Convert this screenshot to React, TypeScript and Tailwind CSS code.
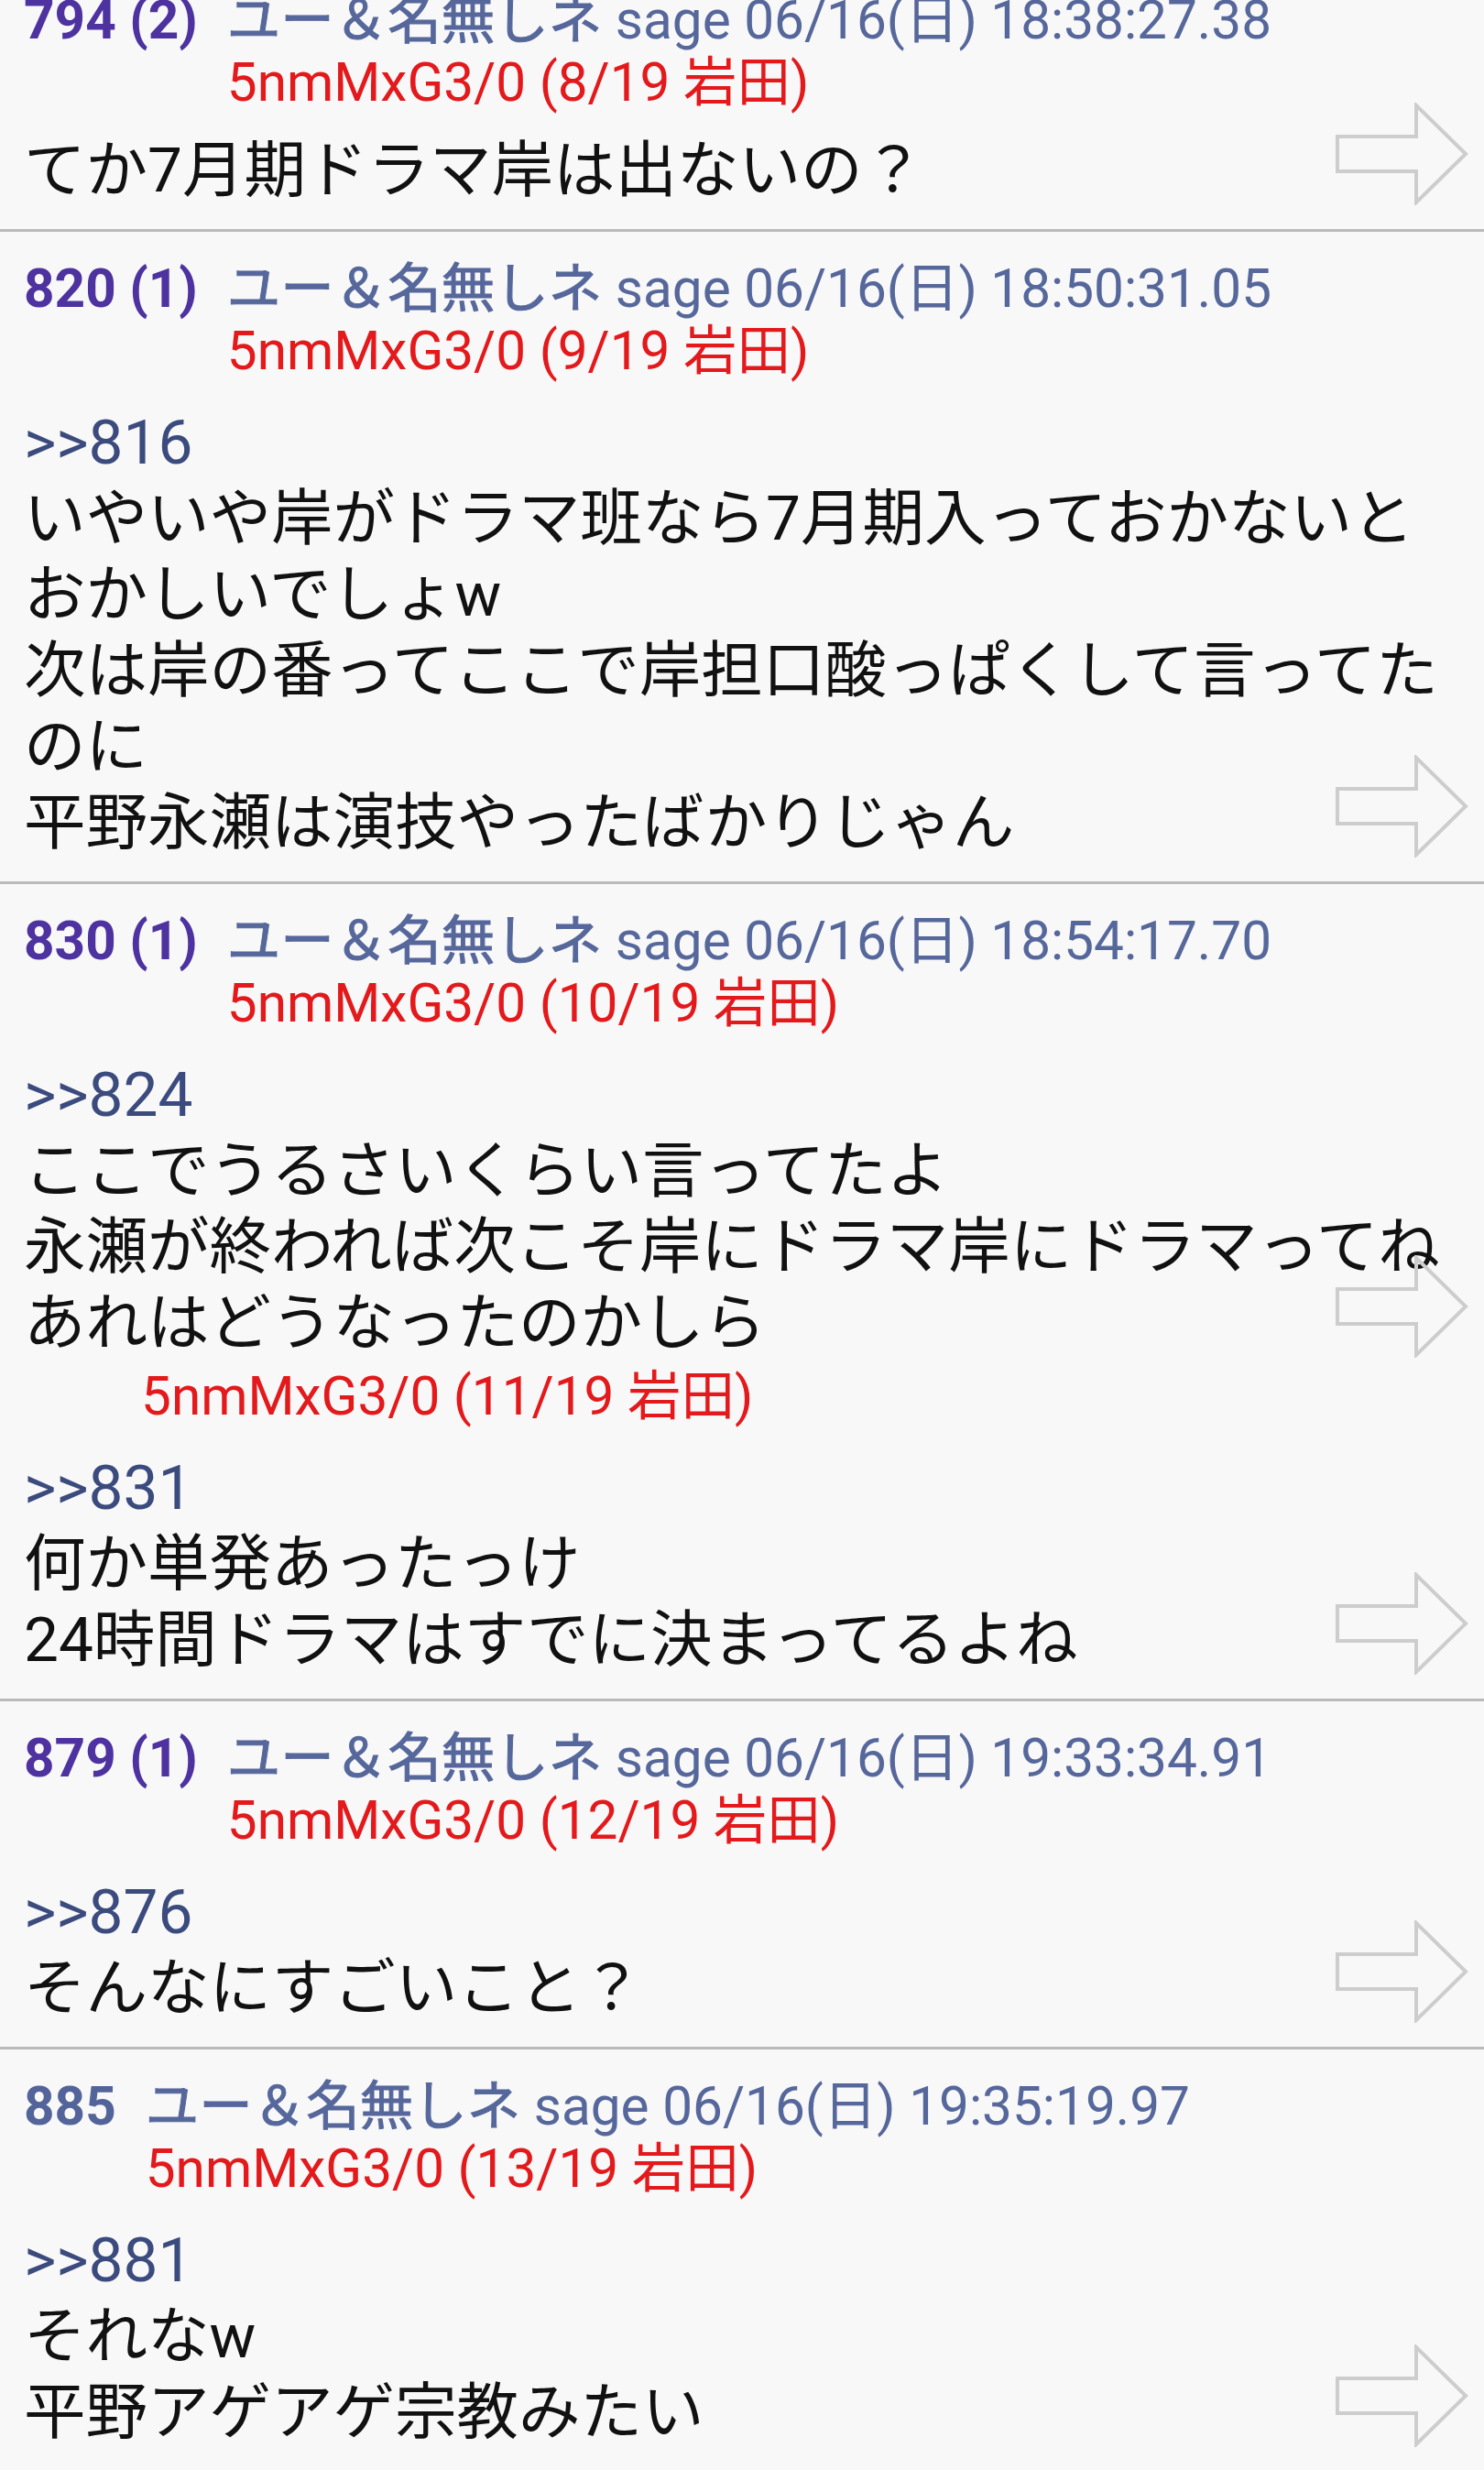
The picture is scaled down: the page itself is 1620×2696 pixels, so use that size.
import React from 'react';

type Sub = {
    id: string;
    reply?: string;
    lines: string[];
};

type Post = {
    no: string;
    count?: string;
    date: string;
    subs: Sub[];
};

const posts: Post[] = [
    {
        no: '794',
        count: '(2)',
        date: '06/16(日) 18:38:27.38',
        subs: [{ id: '5nmMxG3/0 (8/19 岩田)', lines: ['てか7月期ドラマ岸は出ないの？'] }],
    },
    {
        no: '820',
        count: '(1)',
        date: '06/16(日) 18:50:31.05',
        subs: [
            {
                id: '5nmMxG3/0 (9/19 岩田)',
                reply: '>>816',
                lines: [
                    'いやいや岸がドラマ班なら7月期入っておかないとおかしいでしょw',
                    '次は岸の番ってここで岸担口酸っぱくして言ってたのに',
                    '平野永瀬は演技やったばかりじゃん',
                ],
            },
        ],
    },
    {
        no: '830',
        count: '(1)',
        date: '06/16(日) 18:54:17.70',
        subs: [
            {
                id: '5nmMxG3/0 (10/19 岩田)',
                reply: '>>824',
                lines: [
                    'ここでうるさいくらい言ってたよ',
                    '永瀬が終われば次こそ岸にドラマ岸にドラマってね',
                    'あれはどうなったのかしら',
                ],
            },
            {
                id: '5nmMxG3/0 (11/19 岩田)',
                reply: '>>831',
                lines: ['何か単発あったっけ', '24時間ドラマはすでに決まってるよね'],
            },
        ],
    },
    {
        no: '879',
        count: '(1)',
        date: '06/16(日) 19:33:34.91',
        subs: [{ id: '5nmMxG3/0 (12/19 岩田)', reply: '>>876', lines: ['そんなにすごいこと？'] }],
    },
    {
        no: '885',
        date: '06/16(日) 19:35:19.97',
        subs: [
            {
                id: '5nmMxG3/0 (13/19 岩田)',
                reply: '>>881',
                lines: ['それなw', '平野アゲアゲ宗教みたい'],
            },
        ],
    },
];

function Arrow() {
    return (
        <svg width="145" height="112" viewBox="0 0 145 112" className="absolute right-[17px] bottom-[3px]">
            <polygon
                points="2,37 88,37 88,3 142,56 88,109 88,75 2,75"
                fill="none"
                stroke="#cdcdcd"
                strokeWidth="4"
                strokeLinejoin="miter"
            />
        </svg>
    );
}

function Body({ sub, first }: { sub: Sub; first?: boolean }) {
    return (
        <div className={`relative ${first ? 'mt-[20px]' : 'mt-[24px]'} text-[67.5px] leading-[83px] text-[#111111] pr-[28px]`}>
            {sub.reply && <div className="text-[#3b4b7e]">{sub.reply}</div>}
            {sub.lines.map((l, i) => (
                <div key={i}>{l}</div>
            ))}
            <Arrow />
        </div>
    );
}

function PostRow({ post, first }: { post: Post; first?: boolean }) {
    const [head, ...rest] = post.subs;
    return (
        <div className={`${first ? '-mt-[40px]' : ''} pt-[28px] pb-[23px] pl-[26px] border-b-[3px] border-[#bababa]`}>
            <div className="flex text-[58.5px] leading-[68px]">
                <span className={`font-bold whitespace-nowrap ${post.count ? 'text-[#4d32a0]' : 'text-[#53649a]'}`}>
                    {post.no}
                    {post.count && ' ' + post.count}
                </span>
                <div className="ml-[32px]">
                    <div className="text-[#56679b] whitespace-nowrap">
                        <span className="[-webkit-text-stroke:1px_#56679b]">ユー＆名無しネ</span> sage {post.date}
                    </div>
                    <div className="text-[#e3191c] whitespace-nowrap">{head.id}</div>
                </div>
            </div>
            <Body sub={head} first={first} />
            {rest.map((s, i) => (
                <div key={i}>
                    <div className="mt-[5px] pl-[128px] text-[58.5px] leading-[68px] text-[#e3191c]">{s.id}</div>
                    <Body sub={s} />
                </div>
            ))}
        </div>
    );
}

export default function App() {
    return (
        <div className="w-[1620px] h-[2696px] overflow-hidden bg-[#f8f8f8] font-['Roboto','Noto_Sans_CJK_JP',sans-serif]">
            {posts.map((p, i) => (
                <PostRow key={p.no} post={p} first={i === 0} />
            ))}
        </div>
    );
}
